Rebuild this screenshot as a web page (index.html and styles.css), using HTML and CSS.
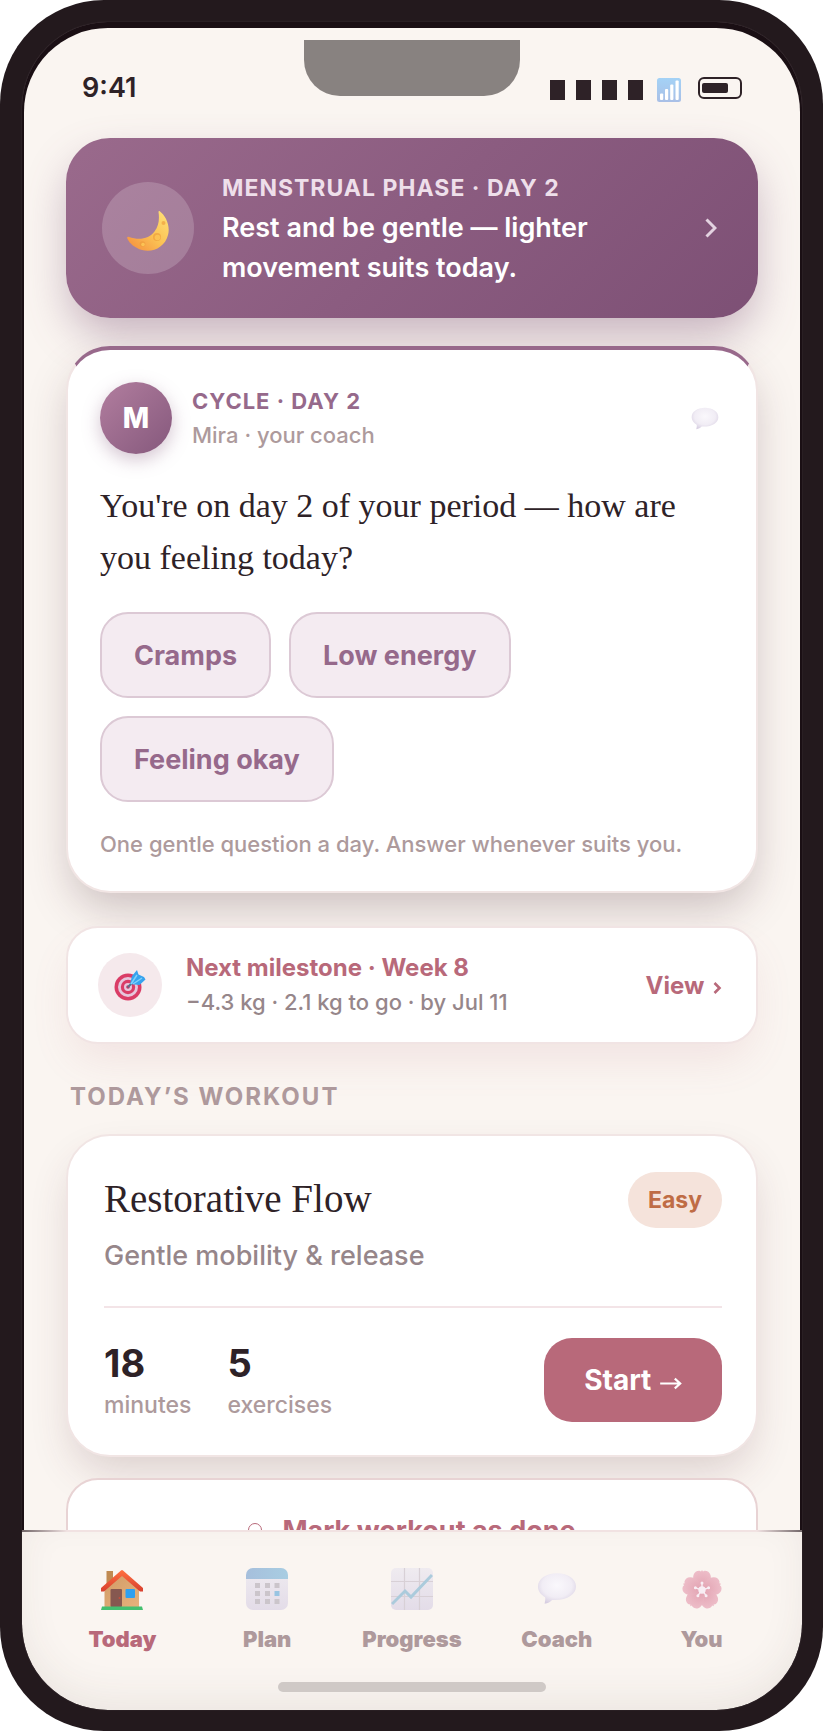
FILE: index.html
```html
<!DOCTYPE html>
<html lang="en">
<head>
<meta charset="utf-8">
<meta name="viewport" content="width=device-width, initial-scale=1">
<title>Today</title>
<link rel="stylesheet" href="styles.css">
</head>
<body>
<svg width="0" height="0" class="defs" aria-hidden="true">
  <defs>
    <radialGradient id="bubbleFill" cx="50%" cy="40%" r="65%">
      <stop offset="0" stop-color="#faf8fc"/><stop offset=".6" stop-color="#f1edf5"/><stop offset="1" stop-color="#d4cbdf"/>
    </radialGradient>
    <linearGradient id="moonFill" x1="1" y1="0" x2="0" y2="1">
      <stop offset="0" stop-color="#ffe27a"/><stop offset=".5" stop-color="#fbc254"/><stop offset="1" stop-color="#f58a3c"/>
    </linearGradient>
    <linearGradient id="signalFill" x1="0" y1="0" x2="0" y2="1">
      <stop offset="0" stop-color="#a4d2f6"/><stop offset="1" stop-color="#a9bfe6"/>
    </linearGradient>
    <linearGradient id="wallFill" x1="0" y1="0" x2="1" y2="1">
      <stop offset="0" stop-color="#d09a66"/><stop offset="1" stop-color="#e6b27c"/>
    </linearGradient>
    <linearGradient id="roofFill" x1="0" y1="0" x2="0" y2="1">
      <stop offset="0" stop-color="#ff7040"/><stop offset="1" stop-color="#d8402f"/>
    </linearGradient>
    <linearGradient id="calTop" x1="0" y1="0" x2="1" y2="0">
      <stop offset="0" stop-color="#a6bfdc"/><stop offset="1" stop-color="#a8cde2"/>
    </linearGradient>
    <linearGradient id="paper" x1="0" y1="0" x2="0" y2="1">
      <stop offset="0" stop-color="#efebf0"/><stop offset="1" stop-color="#e3dce8"/>
    </linearGradient>
    <radialGradient id="petalFill" cx="50%" cy="85%" r="90%">
      <stop offset="0" stop-color="#e2a3b2"/><stop offset="1" stop-color="#eebfca"/>
    </radialGradient>
    <symbol id="bubble" viewBox="0 0 42 34">
      <path d="M21 1C9.500 1 1 7 1 15c0 5 3 8.500 7.500 11.200.6 2-.2 4.300-.5 6.800 3.500-.5 6-2 8-4C31 30 41 23.500 41 15 41 7 32.500 1 21 1z" fill="url(#bubbleFill)"/>
    </symbol>
  </defs>
</svg>

<div class="phone">
  <div class="screen">
    <main class="view">
      <div class="notch"></div>
      <header class="status">
        <span class="time">9:41</span>
        <div class="indicators">
          <span class="bars"><i></i><i></i><i></i><i></i></span>
          <svg class="signal" viewBox="0 0 24 24" aria-hidden="true">
            <rect width="24" height="24" rx="2.500" fill="url(#signalFill)"/>
            <g fill="#fff"><rect x="3" y="15.500" width="3.200" height="6.500" rx="1"/><rect x="8" y="11" width="3.200" height="11" rx="1"/><rect x="13.200" y="6.500" width="3.200" height="15.500" rx="1"/><rect x="18.500" y="2.500" width="3.200" height="19.500" rx="1"/></g>
          </svg>
          <span class="battery"><i></i></span>
        </div>
      </header>

      <div class="feed">
        <button class="phase" type="button">
          <span class="phase-icon">
            <svg width="42" height="40" viewBox="0 0 42 40" aria-hidden="true">
              <path d="M32.500 0C39 5 43.500 15 41 24 38 36 26 42 15 39 8 37 2.500 32.500.300 27.500-.2 26 .8 25.500 2 26c10 3.500 20 2 25.500-5.500C32 14.500 32.500 7.500 31.500 1c0-.8.5-1.300 1-1z" fill="url(#moonFill)"/>
              <g fill="#ec9c3c" fill-opacity=".65"><circle cx="30" cy="26" r="4"/><circle cx="15.500" cy="33" r="2.800"/><circle cx="36.500" cy="12" r="2"/></g>
              <g fill="#fbc254"><circle cx="30.500" cy="26.500" r="2.800"/><circle cx="16" cy="33.500" r="1.800"/></g>
            </svg>
          </span>
          <span class="phase-text">
            <span class="phase-label">MENSTRUAL PHASE · DAY 2</span>
            <span class="phase-copy">Rest and be gentle — lighter movement suits today.</span>
          </span>
          <svg class="chevron" viewBox="0 0 12 20" aria-hidden="true"><path d="M1.500 1.500 10 10l-8.500 8.500" fill="none" stroke="#e3d2e0" stroke-width="3"/></svg>
        </button>

        <section class="card coach">
          <div class="coach-head">
            <span class="avatar">M</span>
            <div class="coach-id">
              <span class="coach-label">CYCLE · DAY 2</span>
              <span class="coach-name">Mira · your coach</span>
            </div>
            <svg class="coach-bubble" aria-hidden="true"><use href="#bubble"/></svg>
          </div>
          <h1 class="question">You're on day 2 of your period — how are you feeling today?</h1>
          <div class="answers">
            <button type="button">Cramps</button>
            <button type="button">Low energy</button>
            <button type="button">Feeling okay</button>
          </div>
          <p class="note">One gentle question a day. Answer whenever suits you.</p>
        </section>

        <section class="milestone">
          <span class="target">
            <svg width="32" height="32" viewBox="0 0 32 32" aria-hidden="true">
              <circle cx="14" cy="18" r="13.500" fill="#da3c66"/><circle cx="14" cy="18" r="10" fill="#e6c6dc"/><circle cx="14" cy="18" r="7.200" fill="#da3c66"/><circle cx="14" cy="18" r="4" fill="#e6c6dc"/><circle cx="14" cy="18" r="1.800" fill="#b83c66"/>
              <path d="m14 18 8-8" stroke="#5b7086" stroke-width="2"/>
              <path d="m16 15 2-8 5-6 1.500 4.500L30 8l1.500 2.500-6 5.500z" fill="#36a3ee"/>
              <path d="m17 15 6-9M19 15l9-6" stroke="#7fd0fa" stroke-width="1.500"/>
            </svg>
          </span>
          <div class="milestone-text">
            <span class="milestone-title">Next milestone · Week 8</span>
            <span class="milestone-sub">−4.3 kg · 2.1 kg to go · by Jul 11</span>
          </div>
          <a class="view-link" href="#milestone">View <svg viewBox="0 0 9 12" aria-hidden="true"><path d="m1.500 1 5 5-5 5" fill="none" stroke="currentColor" stroke-width="2.600"/></svg></a>
        </section>

        <h2 class="section-title">TODAY’S WORKOUT</h2>

        <section class="card workout">
          <div class="workout-head">
            <h3>Restorative Flow</h3>
            <span class="badge">Easy</span>
          </div>
          <p class="workout-sub">Gentle mobility &amp; release</p>
          <div class="workout-foot">
            <div class="stat"><strong>18</strong><span>minutes</span></div>
            <div class="stat"><strong>5</strong><span>exercises</span></div>
            <button class="start" type="button">Start <svg viewBox="0 0 20 12" aria-hidden="true"><path d="M0 6h18M13.500 1.500 18.500 6l-5 4.500" fill="none" stroke="currentColor" stroke-width="2"/></svg></button>
          </div>
        </section>

        <button class="done" type="button"><i></i>Mark workout as done</button>
      </div>
    </main>

    <nav class="tabs">
      <div class="tab-row">
        <a class="tab active" href="#today">
          <svg viewBox="0 0 42 42" aria-hidden="true">
            <rect x="5.500" y="3" width="6.500" height="16" fill="#c08a52"/>
            <path d="M3.500 20 21 4l17 16v19h-34.500z" fill="url(#wallFill)"/>
            <path d="M0 20 20 2.500q1-1 2 0L42 20v3.500h-3L21 8 3 23.500H0z" fill="url(#roofFill)"/>
            <rect x="9.500" y="21" width="11.500" height="18" rx="1" fill="#865850"/><circle cx="18.500" cy="30" r="1" fill="#c4503e"/>
            <rect x="24.500" y="21" width="9.500" height="9" rx="1" fill="#2ea0f0"/>
            <path d="M1 38.500h40l1 3.500H0z" fill="#44c070"/>
          </svg>
          <span>Today</span>
        </a>
        <a class="tab" href="#plan">
          <svg viewBox="0 0 42 42" aria-hidden="true">
            <rect width="42" height="42" rx="7" fill="url(#paper)"/>
            <path d="M0 11V7a7 7 0 0 1 7-7h28a7 7 0 0 1 7 7v4z" fill="url(#calTop)"/>
            <g fill="#cbc5cb"><path d="M9 15h5v5H9zM19 15h5v5h-5zM28.500 15h5v5h-5zM9 23h5v5H9zM19 23h5v5h-5zM9 31h5v5H9zM19 31h5v5h-5zM28.500 31h5v5h-5z"/></g>
            <path d="M28.500 23h5v5h-5z" fill="#98c4e2"/>
          </svg>
          <span>Plan</span>
        </a>
        <a class="tab" href="#progress">
          <svg viewBox="0 0 42 42" aria-hidden="true">
            <rect width="42" height="42" rx="5" fill="url(#paper)"/>
            <path d="M13.500 0v42M28.500 0v42M0 13.500h42M0 28.500h42" stroke="#d8d0d6" stroke-width="1.200"/>
            <path d="m1 36 13-13 6 6L41 7" fill="none" stroke="#abcbdc" stroke-width="3"/>
          </svg>
          <span>Progress</span>
        </a>
        <a class="tab" href="#coach">
          <svg viewBox="0 0 42 42" aria-hidden="true"><use href="#bubble" x="1" y="4" width="40" height="33"/></svg>
          <span>Coach</span>
        </a>
        <a class="tab" href="#you">
          <svg viewBox="0 0 42 42" aria-hidden="true">
            <defs><path id="petal" d="M21 23C14 19 11 12 12.500 7c.8-3 3.500-4.500 6-4.300L20 3.500l1-1.500 1 1.500 1.500-.8c2.500-.2 5.200 1.300 6 4.300C31 12 28 19 21 23z"/></defs>
            <g fill="url(#petalFill)"><use href="#petal"/><use href="#petal" transform="rotate(72 21 22)"/><use href="#petal" transform="rotate(144 21 22)"/><use href="#petal" transform="rotate(216 21 22)"/><use href="#petal" transform="rotate(288 21 22)"/></g>
            <g stroke="#f8eef4" stroke-width="1.400" fill="#f8eef4"><path d="M21 22v-7M21 22l6.600-2.200M21 22l4.100 5.700M21 22l-4.100 5.700M21 22l-6.600-2.200"/><circle cx="21" cy="22" r="3"/><circle cx="21" cy="15" r=".8"/><circle cx="27.600" cy="19.800" r=".8"/><circle cx="25.100" cy="27.700" r=".8"/><circle cx="16.900" cy="27.700" r=".8"/><circle cx="14.400" cy="19.800" r=".8"/></g>
          </svg>
          <span>You</span>
        </a>
      </div>
      <div class="home-bar"></div>
    </nav>
  </div>
</div>
</body>
</html>
```
FILE: styles.css
```css
* { box-sizing: border-box; }
body {
  margin: 0;
  background: #fff;
  color: #2e2227;
  font-family: Inter, "Open Sans", sans-serif;
}
h1, h2, h3, p { margin: 0; }
button { font: inherit; color: inherit; cursor: pointer; }
a { text-decoration: none; }
.defs { position: absolute; }

.phone {
  height: 100vh;
  padding: 22px 21px 21px 22px;
  border-radius: 104px;
  background: #23191d;
}
.screen {
  display: flex;
  flex-direction: column;
  height: 100%;
  overflow: hidden;
  border-radius: 86px;
  background: #1a0f14;
  box-shadow: 0 0 1px #6a5d62;
}
.view {
  position: relative;
  flex: 1;
  min-height: 0;
  margin: 6px 2px 0;
  overflow: hidden;
  border-radius: 84px 84px 0 0;
  background: #faf5f1;
}
.notch {
  position: absolute;
  top: 12px;
  left: 50%;
  width: 216px;
  height: 56px;
  margin-left: -108px;
  border-radius: 0 0 36px 36px;
  background: #888280;
}

.status {
  display: flex;
  align-items: center;
  justify-content: space-between;
  height: 110px;
  padding: 10px 58px 4px;
}
.time { font-size: 27px; font-weight: 600; line-height: 32px; padding-top: 4px; }
.indicators { display: flex; align-items: center; padding-top: 8px; }
.bars { display: flex; gap: 11px; }
.bars i { width: 15px; height: 20px; background: #2e2227; }
.signal { width: 24px; height: 24px; margin: 0 17px 0 14px; }
.battery {
  width: 44px;
  height: 22px;
  margin-bottom: 4px;
  padding: 4px 2px;
  border: 2px solid #2e2227;
  border-radius: 6px;
}
.battery i { display: block; width: 26px; height: 10px; border-radius: 2px; background: #2e2227; }

.feed { display: flex; flex-direction: column; padding: 0 42px; }

.phase {
  display: flex;
  align-items: center;
  gap: 28px;
  padding: 30px 41px 30px 36px;
  border: 0;
  border-radius: 44px;
  background: linear-gradient(135deg, #9a6a8c, #8b5c80 50%, #7d5075);
  color: #fff;
  text-align: left;
  box-shadow: 0 20px 44px -4px rgba(125, 80, 117, .42);
}
.phase-icon {
  display: grid;
  place-items: center;
  flex: none;
  width: 92px;
  height: 92px;
  padding-top: 6px;
  border-radius: 50%;
  background: rgba(255, 255, 255, .18);
}
.phase-text { flex: 1; line-height: 40px; }
.phase-label { display: block; color: #eedfea; font-size: 23px; font-weight: 700; letter-spacing: 1px; }
.phase-copy { display: block; font-size: 27px; font-weight: 600; }
.chevron { flex: none; width: 12px; height: 20px; }

.card {
  border: 2px solid #f1e5e4;
  border-radius: 44px;
  background: #fff;
  box-shadow: 0 20px 44px -6px rgba(70, 35, 45, .26);
}
.coach { margin-top: 28px; padding: 32px 32px 31px; border-top: 4px solid #98698b; }
.coach-head { display: flex; align-items: center; gap: 20px; }
.avatar {
  display: grid;
  place-items: center;
  width: 72px;
  height: 72px;
  border-radius: 50%;
  background: linear-gradient(135deg, #b27e9f, #85587c);
  color: #fff;
  font-size: 28px;
  font-weight: 800;
  box-shadow: 0 6px 18px rgba(133, 88, 124, .35);
}
.coach-id { flex: 1; line-height: 34px; }
.coach-id span { display: block; }
.coach-label { color: #96698b; font-size: 22px; font-weight: 700; letter-spacing: 1px; }
.coach-name { color: #ad9a9c; font-size: 22px; font-weight: 500; }
.coach-bubble { width: 28px; height: 23px; margin-right: 5px; }
.question {
  margin-top: 26px;
  font-family: "Liberation Serif", serif;
  font-size: 34px;
  font-weight: 400;
  line-height: 52px;
}
.answers { display: flex; flex-wrap: wrap; gap: 18px; margin-top: 28px; }
.answers button {
  height: 86px;
  padding: 0 32px;
  border: 2px solid #dcc9d5;
  border-radius: 28px;
  background: #f4ebf1;
  color: #96698b;
  font-size: 27px;
  font-weight: 700;
}
.note { margin-top: 26px; color: #ad9a9c; font-size: 22px; font-weight: 500; line-height: 32px; }

.milestone {
  display: flex;
  align-items: center;
  gap: 24px;
  margin-top: 33px;
  padding: 22px 34px 22px 30px;
  border: 2px solid #f1e4e4;
  border-radius: 32px;
  background: #fff;
  box-shadow: 0 20px 44px -8px rgba(184, 105, 122, .14);
}
.target {
  display: grid;
  place-items: center;
  width: 64px;
  height: 64px;
  border-radius: 50%;
  background: #f5e9ec;
}
.milestone-text { flex: 1; line-height: 35px; }
.milestone-text span { display: block; }
.milestone-title { color: #b8697a; font-size: 24px; font-weight: 700; }
.milestone-sub { color: #96868a; font-size: 22px; font-weight: 500; }
.view-link { color: #b8697a; font-size: 24px; font-weight: 700; white-space: nowrap; }
.view-link svg { width: 9px; height: 12px; margin-left: 3px; }

.section-title {
  margin: 38px 4px 22px;
  color: #ae999c;
  font-size: 24px;
  font-weight: 700;
  line-height: 30px;
  letter-spacing: 2px;
}

.workout { padding: 36px 34px 33px 36px; box-shadow: 0 20px 44px -8px rgba(90, 45, 55, .2); }
.workout-head { display: flex; justify-content: space-between; }
.workout-head h3 { font-family: "Liberation Serif", serif; font-size: 39px; font-weight: 400; line-height: 54px; }
.badge {
  padding: 0 20px;
  border-radius: 28px;
  background: #f5e3db;
  color: #bf6c45;
  font-size: 23px;
  font-weight: 700;
  line-height: 56px;
}
.workout-sub { margin-top: 12px; color: #96868a; font-size: 27px; font-weight: 500; line-height: 32px; }
.workout-foot {
  display: flex;
  align-items: center;
  gap: 36px;
  margin-top: 34px;
  padding-top: 30px;
  border-top: 2px solid #f3e4e7;
}
.stat strong { display: block; font-size: 38px; font-weight: 700; line-height: 50px; }
.stat span { display: block; color: #ad9a9c; font-size: 23px; font-weight: 500; line-height: 34px; }
.start {
  height: 84px;
  margin-left: auto;
  padding: 0 40px;
  border: 0;
  border-radius: 28px;
  background: #b8697a;
  color: #fff;
  font-size: 28px;
  font-weight: 700;
}
.start svg { width: 22px; height: 13px; margin-left: 2px; }

.done {
  display: flex;
  align-items: center;
  justify-content: center;
  gap: 20px;
  height: 104px;
  margin-top: 21px;
  border: 2px solid #e8d3d4;
  border-radius: 32px;
  background: #fff;
  color: #b8697a;
  font-size: 27px;
  font-weight: 700;
}
.done i { width: 14px; height: 14px; border: 1px solid #b8697a; border-radius: 50%; }

.tabs {
  flex: none;
  padding: 36px 28px 18px;
  border-top: 2px solid;
  border-image: linear-gradient(90deg, #6b6062, #f1e2e2 6%, #f1e2e2 94%, #6b6062) 2;
  border-radius: 0 0 86px 86px;
  background: #faf5f1;
  box-shadow: inset 0 -14px 44px -8px rgba(70, 50, 40, .09);
}
.tab-row { display: grid; grid-template-columns: repeat(5, 1fr); }
.tab {
  display: flex;
  flex-direction: column;
  align-items: center;
  gap: 14px;
  color: #ae999c;
  font-size: 22px;
  font-weight: 900;
  line-height: 30px;
}
.tab svg { width: 42px; height: 42px; }
.tab.active { color: #b8697a; }
.home-bar { width: 268px; height: 10px; margin: 28px auto 0; border-radius: 5px; background: #cfc9c6; }
```
